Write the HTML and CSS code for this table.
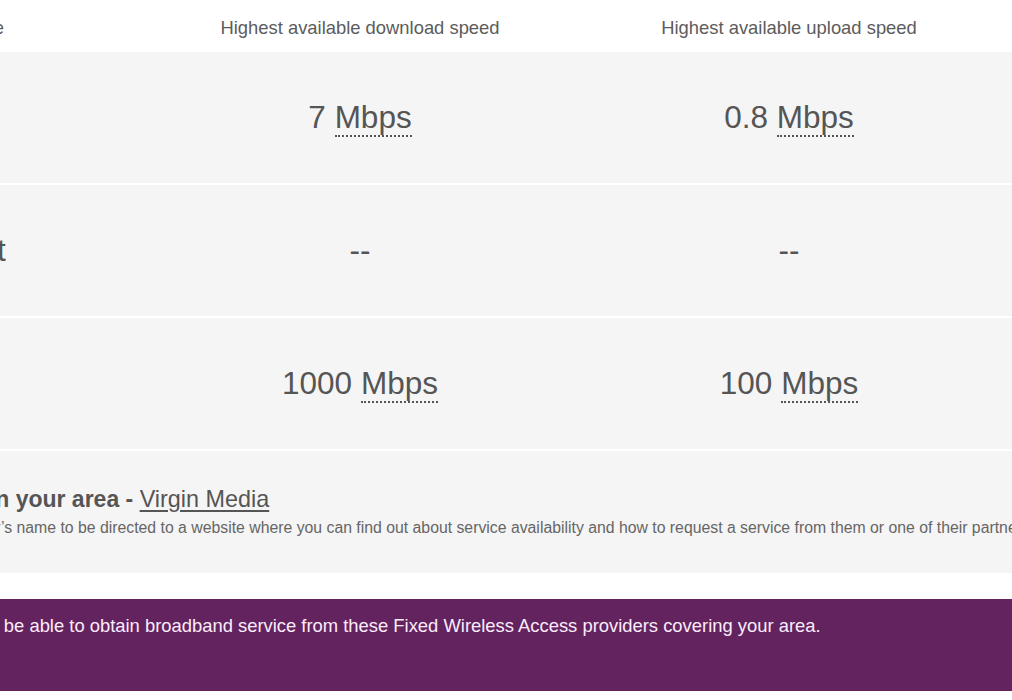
FILE: index.html
```html
<!DOCTYPE html>
<html lang="en">
<head>
<meta charset="utf-8">
<title>Broadband availability</title>
<link rel="stylesheet" href="styles.css">
</head>
<body>
<div class="page">
  <div class="speed-table">
    <div class="row head">
      <div class="cell label">Connection type</div>
      <div class="cell">Highest available download speed</div>
      <div class="cell">Highest available upload speed</div>
      <div class="cell"></div>
    </div>
    <div class="row">
      <div class="cell label">Standard</div>
      <div class="cell value">7 <abbr class="unit" title="Megabits per second">Mbps</abbr></div>
      <div class="cell value">0.8 <abbr class="unit" title="Megabits per second">Mbps</abbr></div>
      <div class="cell"></div>
    </div>
    <div class="row">
      <div class="cell label">Superfast</div>
      <div class="cell value">--</div>
      <div class="cell value">--</div>
      <div class="cell"></div>
    </div>
    <div class="row">
      <div class="cell label">Ultrafast</div>
      <div class="cell value">1000 <abbr class="unit" title="Megabits per second">Mbps</abbr></div>
      <div class="cell value">100 <abbr class="unit" title="Megabits per second">Mbps</abbr></div>
      <div class="cell"></div>
    </div>
  </div>

  <section class="providers">
    <h2 class="providers-title">Also available in your area - <a class="provider-link" href="#">Virgin Media</a></h2>
    <p class="providers-desc">Click on the service provider’s name to be directed to a website where you can find out about service availability and how to request a service from them or one of their partners.</p>
  </section>

  <section class="notice">
    <p class="notice-text">You may also be able to obtain broadband service from these Fixed Wireless Access providers covering your area.</p>
  </section>
</div>
</body>
</html>
```

FILE: styles.css
```css
html, body {
  margin: 0;
  padding: 0;
  overflow: hidden;
  background: #ffffff;
}

body {
  font-family: "Liberation Sans", Arial, sans-serif;
  color: #555555;
}

.page {
  margin-left: -400px;
  width: 1412px;
}

.speed-table {
  display: flex;
  flex-direction: column;
}

.row {
  display: grid;
  grid-template-columns: 545.5px 429px 429px 1fr;
  align-items: center;
  height: 131px;
  background: #f5f5f5;
  border-bottom: 2px solid #ffffff;
}

.row.head {
  height: 52px;
  background: #ffffff;
  border-bottom: 0;
  font-size: 18.4px;
  color: #5c5c5c;
  padding-top: 3px;
  box-sizing: border-box;
}

.cell {
  text-align: center;
  white-space: nowrap;
}

.cell.label {
  text-align: left;
  padding-left: 271px;
  font-size: 31.5px;
}

.row.head .cell.label {
  font-size: 18.4px;
}

.value {
  font-size: 31.5px;
  color: #555555;
}

.unit {
  text-decoration: none;
  border-bottom: 2px dotted #555555;
}

.providers {
  background: #f5f5f5;
  height: 122px;
  padding: 34px 0 0 202px;
  box-sizing: border-box;
  white-space: nowrap;
}

.providers-title {
  margin: 0 0 0 27px;
  font-size: 23px;
  line-height: 28px;
  font-weight: bold;
  color: #555555;
}

.provider-link {
  font-weight: normal;
  font-size: 23.4px;
  color: #555555;
  text-decoration: underline;
  text-underline-offset: 3px;
}

.providers-desc {
  margin: 6px 0 0 0;
  font-size: 15.8px;
  line-height: 18px;
  color: #666666;
}

.notice {
  margin-top: 26px;
  background: #62235f;
  height: 92px;
  padding: 16px 0 0 289px;
  box-sizing: border-box;
  white-space: nowrap;
}

.notice-text {
  margin: 0;
  font-size: 18.4px;
  line-height: 22px;
  color: #fcecfb;
}
```
